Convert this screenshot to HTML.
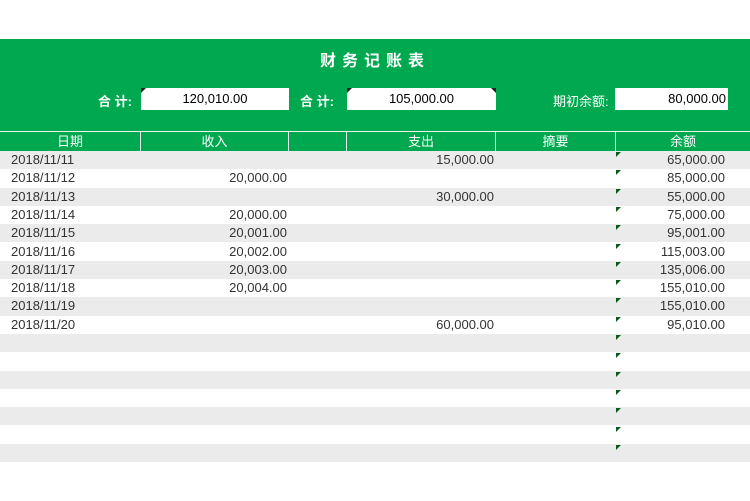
<!DOCTYPE html>
<html><head><meta charset="utf-8"><style>
body{margin:0;width:750px;height:501px;background:#fff;position:relative;overflow:hidden;font-family:"Liberation Sans","Noto Sans CJK SC",sans-serif;}
.g{position:absolute;left:0;top:39px;width:750px;height:112px;background:#00a84f;}
.t{position:absolute;top:47px;left:0;width:750px;text-align:center;color:#fff;font-weight:bold;font-size:16px;letter-spacing:6px;}
.lab{position:absolute;color:#fff;font-size:13px;font-weight:bold;top:91px;}
.box{position:absolute;top:88px;height:22px;background:#fff;font-size:13px;line-height:22px;color:#000;}
.hd{position:absolute;top:131px;height:20px;border-top:1px solid #e8f5ec;box-sizing:border-box;color:#fff;font-size:13px;line-height:19px;text-align:center;border-right:1px solid #e8f5ec;}
.row{position:absolute;left:0;width:750px;height:18.3px;font-size:13px;color:#333;line-height:18px;}
.row span{position:absolute;}
.tri{position:absolute;left:616px;width:0;height:0;border-top:5px solid #0a5a1c;border-right:5px solid transparent;}
</style></head><body>
<div class="g"></div>
<div class="t">财务记账表</div>
<div class="lab" style="left:98px">合 计:</div>
<div class="box" style="left:141px;width:148px;text-align:center">120,010.00</div>
<div class="lab" style="left:300px">合 计:</div>
<div class="box" style="left:347px;width:149px;text-align:center">105,000.00</div>
<div class="lab" style="left:553px;font-weight:normal">期初余额:</div>
<div class="box" style="left:615px;width:113px;text-align:right;padding-right:2px;box-sizing:border-box">80,000.00</div>
<div style="position:absolute;left:141px;top:88px;border-top:5px solid #222;border-right:5px solid transparent"></div>
<div style="position:absolute;left:347px;top:88px;border-top:5px solid #222;border-right:5px solid transparent"></div>
<div style="position:absolute;left:491px;top:88px;border-top:5px solid #222;border-left:5px solid transparent"></div>
<div class="hd" style="left:0;width:141px">日期</div>
<div class="hd" style="left:141px;width:148px">收入</div>
<div class="hd" style="left:289px;width:58px"></div>
<div class="hd" style="left:347px;width:149px">支出</div>
<div class="hd" style="left:496px;width:120px">摘要</div>
<div class="hd" style="left:616px;width:134px;border-right:none">余额</div>
<div id="rows"></div>
<script>
var d=[["2018/11/11","","15,000.00","65,000.00"],["2018/11/12","20,000.00","","85,000.00"],["2018/11/13","","30,000.00","55,000.00"],["2018/11/14","20,000.00","","75,000.00"],["2018/11/15","20,001.00","","95,001.00"],["2018/11/16","20,002.00","","115,003.00"],["2018/11/17","20,003.00","","135,006.00"],["2018/11/18","20,004.00","","155,010.00"],["2018/11/19","","","155,010.00"],["2018/11/20","","60,000.00","95,010.00"]];
var h="";
for(var i=0;i<17;i++){var y=151+i*18.3;var r=d[i]||["","","",""];
h+='<div class="row" style="top:'+y+'px;background:'+(i%2==0?'#ebebeb':'#fff')+'"><span style="left:11px">'+r[0]+'</span><span style="right:463px">'+r[1]+'</span><span style="right:256px">'+r[2]+'</span><span style="right:25px">'+r[3]+'</span></div><div class="tri" style="top:'+(y+1)+'px"></div>';}
document.getElementById("rows").innerHTML=h;
</script>
</body></html>
